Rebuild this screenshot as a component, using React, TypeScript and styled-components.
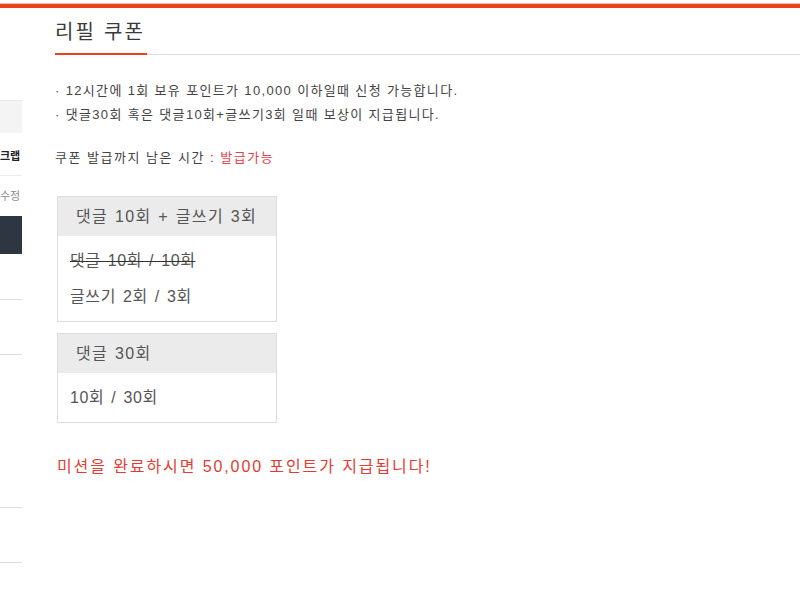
import React from "react";
import styled, { createGlobalStyle } from "styled-components";

const GlobalStyle = createGlobalStyle`
    html, body {
        margin: 0;
        padding: 0;
        background: #fff;
    }
    body {
        font-family: "Liberation Sans", "Noto Sans CJK KR", sans-serif;
        color: #333;
    }
`;

const TopBar = styled.div`
    margin-top: 4px;
    height: 4px;
    background: #e9431b;
    box-shadow: 0 -1px 0 #f6b8a6;
`;

const Layout = styled.div`
    display: flex;
    align-items: flex-start;
    height: 602px;
    overflow: hidden;
`;

const Sidebar = styled.div`
    width: 22px;
    margin-right: 33px;
    padding-top: 92px;
    display: flex;
    flex-direction: column;
    flex-shrink: 0;
`;

const SideGray = styled.div`
    height: 32px;
    background: #f4f4f4;
    border-top: 1px solid #ececec;
`;

const SideItem = styled.div<{ muted?: boolean; }>`
    height: ${props => props.muted ? "40px" : "42px"};
    line-height: ${props => props.muted ? "40px" : "46px"};
    font-size: 11px;
    white-space: nowrap;
    color: ${props => props.muted ? "#8a8a8a" : "#222"};
    font-weight: ${props => props.muted ? "normal" : "bold"};
    border-bottom: ${props => props.muted ? "none" : "1px solid #ececec"};
`;

const SideDark = styled.div`
    height: 38px;
    background: #2e3741;
`;

const SideLine = styled.div<{ gap: number; }>`
    margin-top: ${props => props.gap}px;
    height: 1px;
    background: #dcdcdc;
`;

const Main = styled.div`
    flex: 1;
    min-width: 0;
`;

const Header = styled.div`
    border-bottom: 1px solid #dddddd;
    padding-top: 12px;
`;

const Title = styled.h2`
    display: inline-block;
    margin: 0 0 -1px;
    padding: 0 2px 9px 0;
    font-size: 20px;
    line-height: 24px;
    font-weight: normal;
    letter-spacing: 2.2px;
    color: #3a3a3a;
    border-bottom: 2px solid #e9431b;
`;

const Notes = styled.ul`
    list-style: none;
    margin: 24px 0 0;
    padding: 0;
`;

const Note = styled.li`
    font-size: 13px;
    line-height: 24px;
    color: #444;
    letter-spacing: 1.35px;
`;

const Remain = styled.p`
    margin: 19px 0 0;
    font-size: 13px;
    line-height: 24px;
    color: #444;
    letter-spacing: 1.5px;
`;

const RedText = styled.span`
    color: #e8414b;
`;

const Missions = styled.div`
    margin: 26px 0 0 2px;
    display: flex;
    flex-direction: column;
    gap: 11px;
`;

const Card = styled.div`
    width: 218px;
    border: 1px solid #dddddd;
`;

const CardHead = styled.div`
    height: 39px;
    line-height: 40px;
    padding-left: 18px;
    background: #ebebeb;
    font-size: 16px;
    color: #555;
    letter-spacing: 1.35px;
    word-spacing: 1px;
`;

const CardBody = styled.div`
    padding: 7px 12px 6px;
`;

const CardLine = styled.div<{ done?: boolean; }>`
    font-size: 16px;
    line-height: 36px;
    color: #555;
    letter-spacing: 0.6px;
    word-spacing: 2px;
    text-decoration: ${props => props.done ? "line-through" : "none"};
    text-decoration-color: #333;
`;

const Reward = styled.p`
    margin: 32px 0 0 2px;
    font-size: 16px;
    line-height: 24px;
    color: #e23b34;
    letter-spacing: 1.9px;
`;

const missions = [
    { title: "댓글 10회 + 글쓰기 3회", lines: [{ text: "댓글 10회 / 10회", done: true }, { text: "글쓰기 2회 / 3회", done: false }] },
    { title: "댓글 30회", lines: [{ text: "10회 / 30회", done: false }] }
];

const App = () => {
    return (
        <>
            <GlobalStyle />
            <TopBar />
            <Layout>
                <Sidebar>
                    <SideGray />
                    <SideItem>크랩</SideItem>
                    <SideItem muted>수정</SideItem>
                    <SideDark />
                    <SideLine gap={45} />
                    <SideLine gap={54} />
                    <SideLine gap={152} />
                    <SideLine gap={54} />
                </Sidebar>
                <Main>
                    <Header>
                        <Title>리필 쿠폰</Title>
                    </Header>
                    <Notes>
                        <Note>· 12시간에 1회 보유 포인트가 10,000 이하일때 신청 가능합니다.</Note>
                        <Note>· 댓글30회 혹은 댓글10회+글쓰기3회 일때 보상이 지급됩니다.</Note>
                    </Notes>
                    <Remain>쿠폰 발급까지 남은 시간 : <RedText>발급가능</RedText></Remain>
                    <Missions>
                        {missions.map(m => (
                            <Card key={m.title}>
                                <CardHead>{m.title}</CardHead>
                                <CardBody>
                                    {m.lines.map(l => (
                                        <CardLine key={l.text} done={l.done}>{l.text}</CardLine>
                                    ))}
                                </CardBody>
                            </Card>
                        ))}
                    </Missions>
                    <Reward>미션을 완료하시면 50,000 포인트가 지급됩니다!</Reward>
                </Main>
            </Layout>
        </>
    );
};

export default App;
